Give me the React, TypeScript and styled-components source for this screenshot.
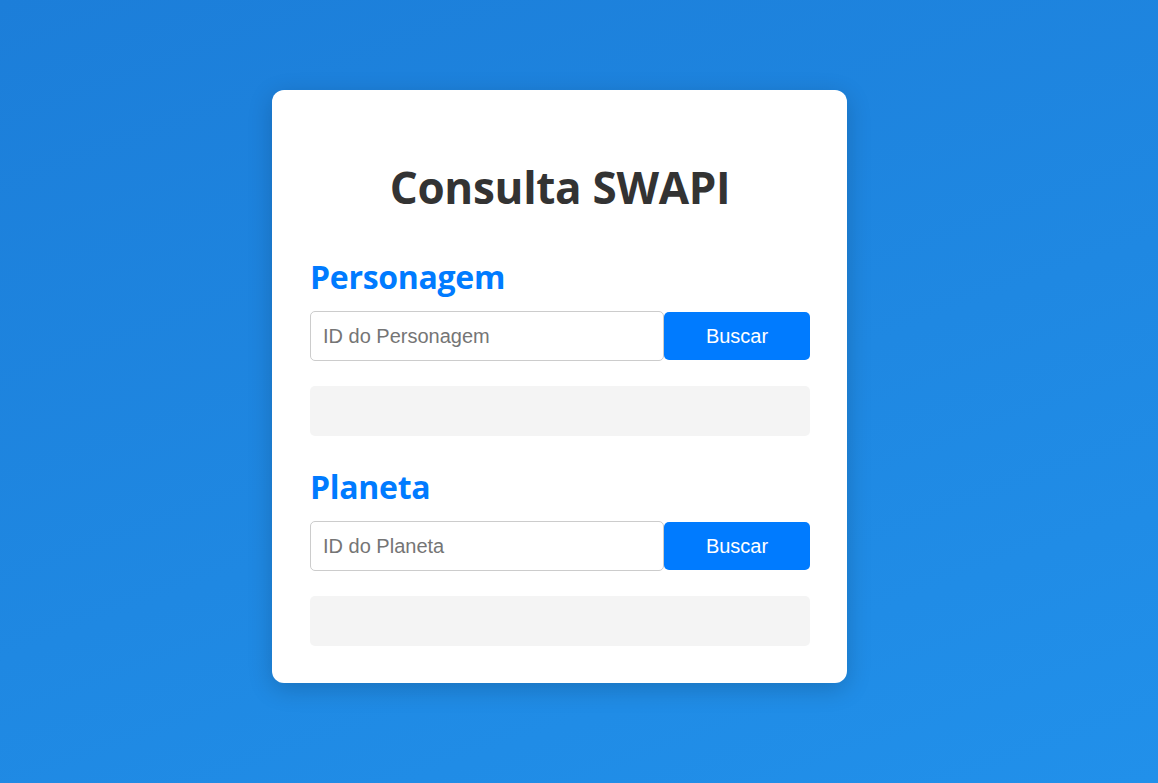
import React from "react";
import styled, { createGlobalStyle } from "styled-components";

const GlobalStyle = createGlobalStyle`
  html, body {
    margin: 0;
    padding: 0;
  }
  body {
    font-family: "Open Sans", "Noto Sans", sans-serif;
    background: linear-gradient(160deg, #1c7ed9 0%, #1f88e2 55%, #2190ea 100%);
    min-height: 100vh;
  }
`;

const Page = styled.div`
  min-height: 783px;
  box-sizing: border-box;
  padding: 90px 0 0 272px;
`;

const Card = styled.div`
  width: 575px;
  box-sizing: border-box;
  background: #ffffff;
  border-radius: 12px;
  padding: 38px 37px 37px 38px;
  box-shadow: 0 6px 24px rgba(0, 0, 0, 0.18);
`;

const Title = styled.h1`
  margin: 29px 0 38px;
  text-align: center;
  font-family: "Open Sans", "Noto Sans", sans-serif;
  font-weight: 700;
  font-size: 44px;
  line-height: 60px;
  color: #333333;
  letter-spacing: -0.3px;
`;

const Section = styled.section`
  & + & {
    margin-top: 29px;
  }
`;

const SectionTitle = styled.h2`
  margin: 0 0 12px;
  font-family: "Open Sans", "Noto Sans", sans-serif;
  font-weight: 700;
  font-size: 32px;
  line-height: 44px;
  color: #007bff;
  letter-spacing: -0.3px;
`;

const Row = styled.div`
  display: flex;
  align-items: center;
`;

const Input = styled.input`
  flex: 1;
  min-width: 0;
  height: 50px;
  box-sizing: border-box;
  padding: 0 12px;
  border: 1px solid #cccccc;
  border-radius: 5px;
  font-family: "Liberation Sans", Arial, sans-serif;
  font-size: 20px;
  color: #333;
  outline: none;
  &::placeholder {
    color: #757575;
  }
`;

const Button = styled.button`
  width: 146px;
  height: 48px;
  border: none;
  border-radius: 5px;
  background: #007bff;
  color: #ffffff;
  font-family: "Liberation Sans", Arial, sans-serif;
  font-size: 20px;
  cursor: pointer;
`;

const Result = styled.div`
  margin-top: 25px;
  height: 50px;
  border-radius: 5px;
  background: #f4f4f4;
`;

const Lookup: React.FC<{ title: string; placeholder: string }> = ({ title, placeholder }) => (
  <Section>
    <SectionTitle>{title}</SectionTitle>
    <Row>
      <Input type="number" placeholder={placeholder} />
      <Button>Buscar</Button>
    </Row>
    <Result />
  </Section>
);

export default function App() {
  return (
    <>
      <GlobalStyle />
      <Page>
        <Card>
          <Title>Consulta SWAPI</Title>
          <Lookup title="Personagem" placeholder="ID do Personagem" />
          <Lookup title="Planeta" placeholder="ID do Planeta" />
        </Card>
      </Page>
    </>
  );
}
